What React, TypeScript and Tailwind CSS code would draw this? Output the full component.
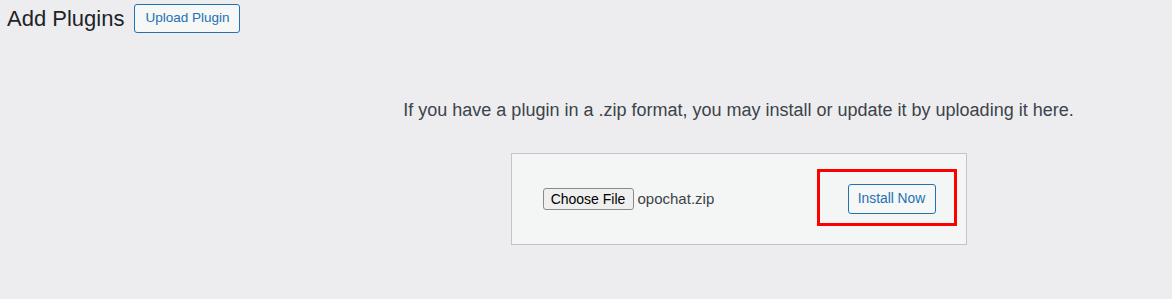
import React from "react";

export default function App() {
  const font = { fontFamily: '"Liberation Sans", Arial, sans-serif' };
  return (
    <div className="w-[1172px] h-[299px] bg-[#ededef] overflow-hidden text-[#3c434a]" style={font}>
      <div className="flex items-center h-[34px] pl-[7px] pt-[3px]">
        <h1 className="text-[22px] leading-[29px] text-[#1d2327] font-normal">Add Plugins</h1>
        <button className="ml-[10px] h-[29px] w-[106px] rounded-[3px] border border-[#2271b1] bg-[#f6f7f7] text-[13.5px] text-[#2271b1]">
          Upload Plugin
        </button>
      </div>
      <div className="pl-[305px] flex flex-col items-center">
        <p className="mt-[65px] text-[18px] leading-[22px] text-[#3c434a]">
          If you have a plugin in a .zip format, you may install or update it by uploading it here.
        </p>
        <div className="mt-[32px] w-[456px] h-[92px] border border-[#c3c4c7] bg-[#f4f5f5] flex items-center justify-between pl-[31px] pr-[30px]">
          <div className="flex items-center">
            <span className="h-[22px] w-[91px] rounded-[3px] border border-[#8a8a8a] bg-[#efefef] text-[14px] leading-[20px] text-black flex items-center justify-center">
              Choose File
            </span>
            <span className="ml-[4px] text-[15px] text-[#3c434a]">opochat.zip</span>
          </div>
          <div className="relative">
            <button className="h-[30px] w-[88px] rounded-[3px] border border-[#2271b1] bg-[#f6f7f7] text-[13.8px] text-[#2271b1]">
              Install Now
            </button>
            <div className="absolute left-[-31px] top-[-15px] w-[140px] h-[57px] border-[3px] border-[#ff0000] pointer-events-none" />
          </div>
        </div>
      </div>
    </div>
  );
}
